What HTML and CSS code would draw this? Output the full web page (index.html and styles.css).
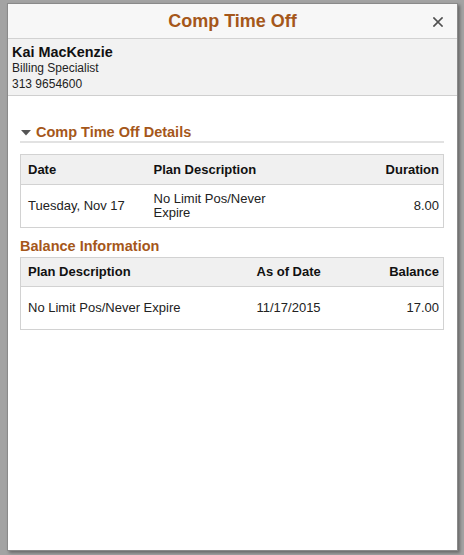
FILE: index.html
```html
<!DOCTYPE html>
<html>
<head>
<meta charset="utf-8">
<link rel="stylesheet" href="styles.css">
</head>
<body>
<div class="modal">
  <div class="modal-header">
    <span></span>
    <h1 class="modal-title">Comp Time Off</h1>
    <span class="close">
      <svg width="10" height="10" viewBox="0 0 10 10"><path d="M1 1 L9 9 M9 1 L1 9" stroke="#505050" stroke-width="1.7" stroke-linecap="square"/></svg>
    </span>
  </div>
  <div class="person">
    <div class="person-name">Kai MacKenzie</div>
    <div class="person-line">Billing Specialist</div>
    <div class="person-line">313 9654600</div>
  </div>
  <div class="content">
    <div class="section-head">
      <svg class="caret" width="10" height="6" viewBox="0 0 10 6"><path d="M0 0 H10 L5 5.5 Z" fill="#555"/></svg>
      <span>Comp Time Off Details</span>
    </div>
    <table class="grid grid-details">
      <colgroup><col class="c1"><col class="c2"><col></colgroup>
      <thead>
        <tr><th>Date</th><th>Plan Description</th><th class="num">Duration</th></tr>
      </thead>
      <tbody>
        <tr><td>Tuesday, Nov 17</td><td>No Limit Pos/Never Expire</td><td class="num">8.00</td></tr>
      </tbody>
    </table>
    <div class="sub-head">Balance Information</div>
    <table class="grid grid-balance">
      <colgroup><col class="b1"><col class="b2"><col></colgroup>
      <thead>
        <tr><th>Plan Description</th><th>As of Date</th><th class="num">Balance</th></tr>
      </thead>
      <tbody>
        <tr><td>No Limit Pos/Never Expire</td><td>11/17/2015</td><td class="num">17.00</td></tr>
      </tbody>
    </table>
  </div>
</div>
</body>
</html>
```
FILE: styles.css
```css
html, body {
  margin: 0;
  padding: 0;
}
body {
  background: #a3a3a3;
  font-family: "Liberation Sans", Arial, sans-serif;
  color: #222;
  width: 464px;
  height: 555px;
  overflow: hidden;
}
.modal {
  box-sizing: border-box;
  margin: 3px 0 0 7px;
  width: 451px;
  height: 548px;
  background: #fff;
  border: 1px solid #8a8a8a;
  box-shadow: 2px 2px 3px rgba(0,0,0,0.35);
}
.modal-header {
  display: grid;
  grid-template-columns: 1fr auto 1fr;
  align-items: center;
  height: 34px;
  background: #f7f7f7;
  border-bottom: 1px solid #d2d2d2;
}
.modal-title {
  margin: 0;
  font-size: 18px;
  font-weight: bold;
  color: #a5571a;
  line-height: 34px;
}
.close {
  justify-self: end;
  margin-right: 14px;
  display: flex;
  align-items: center;
  padding-top: 2px;
}
.person {
  background: #f2f2f2;
  border-bottom: 1px solid #cfcfcf;
  padding: 5px 5px 3px 4px;
}
.person-name {
  font-size: 14.4px;
  font-weight: bold;
  line-height: 16px;
  color: #111;
}
.person-line {
  font-size: 12px;
  line-height: 16px;
  color: #222;
}
.content {
  padding: 27px 13px 0 12px;
}
.section-head {
  display: flex;
  align-items: center;
  gap: 5px;
  font-size: 14.5px;
  font-weight: bold;
  line-height: 18px;
  color: #a5571a;
  border-bottom: 2px solid #e2e2e2;
  padding-left: 1px;
}
.caret {
  margin-top: 1px;
}
.sub-head {
  margin-top: 9px;
  font-size: 14.5px;
  font-weight: bold;
  line-height: 18px;
  color: #a5571a;
}
.grid {
  width: 100%;
  table-layout: fixed;
  border-collapse: collapse;
  border: 1px solid #d2d2d2;
  font-size: 13px;
  line-height: 14px;
}
.grid-details {
  margin-top: 11px;
}
.grid-balance {
  margin-top: 2px;
}
.grid th, .grid td {
  padding: 0 4px 0 7px;
  text-align: left;
  vertical-align: middle;
}
.grid th {
  background: #f0f0f0;
  font-weight: bold;
  color: #111;
  height: 29px;
  border-bottom: 1px solid #d2d2d2;
}
.grid-balance th {
  height: 28px;
}
.grid td {
  height: 42px;
  color: #222;
}
.grid td:nth-child(2) {
  padding-right: 14px;
}
.grid .num {
  text-align: right;
}
col.c1 { width: 126px; }
col.c2 { width: 140px; }
col.b1 { width: 229px; }
col.b2 { width: 110px; }
```
